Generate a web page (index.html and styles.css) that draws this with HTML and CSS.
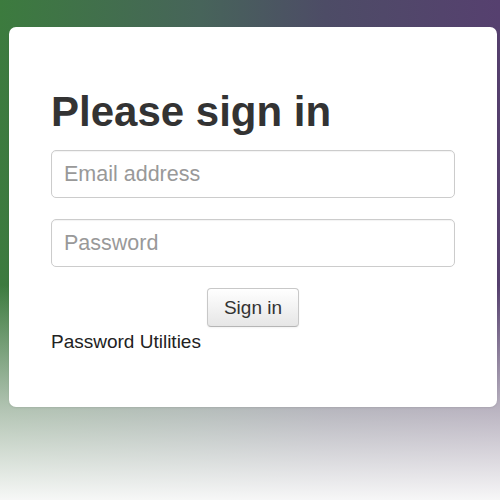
FILE: index.html
```html
<!DOCTYPE html>
<html>
<head>
<meta charset="utf-8">
<link rel="stylesheet" href="styles.css">
</head>
<body>
<div class="page">
  <form class="card">
    <h1 class="title">Please sign in</h1>
    <input class="field" type="text" placeholder="Email address">
    <input class="field" type="password" placeholder="Password">
    <div class="actions"><button class="btn" type="button">Sign in</button></div>
    <a class="link">Password Utilities</a>
  </form>
</div>
</body>
</html>
```
FILE: styles.css
```css
html, body {
  margin: 0;
  height: 100%;
}
body {
  font-family: "Liberation Sans", Arial, sans-serif;
  background:
    linear-gradient(to bottom, rgba(236,236,236,0) 0%, rgba(236,236,236,0) 57%, rgba(225,225,225,0.72) 82%, rgba(250,250,250,0.98) 100%),
    linear-gradient(to right, #3c7b3e 0%, #47645a 40%, #4d4c66 65%, #56406f 100%);
}
.page {
  padding: 27px 3px 0 9px;
}
.card {
  box-sizing: border-box;
  height: 380px;
  background: #fff;
  border-radius: 7px;
  padding: 62px 42px 0 42px;
  display: flex;
  flex-direction: column;
  box-shadow: 0 1px 2px rgba(0,0,0,0.08);
}
.title {
  margin: 0 0 15px 0;
  font-size: 42px;
  line-height: 46px;
  font-weight: bold;
  color: #333;
}
.field {
  box-sizing: border-box;
  height: 48px;
  width: 100%;
  margin: 0 0 21px 0;
  padding: 0 12px;
  border: 1px solid #cccccc;
  border-radius: 5px;
  font-family: inherit;
  font-size: 21.5px;
  color: #555;
  background: #fff;
  box-shadow: inset 0 1px 1px rgba(0,0,0,0.05);
  outline: none;
}
.field::placeholder {
  color: #999;
}
.actions {
  display: flex;
  justify-content: center;
}
.btn {
  box-sizing: border-box;
  width: 92px;
  height: 39px;
  padding: 0;
  border: 1px solid #c8c8c8;
  border-bottom-color: #b5b5b5;
  border-radius: 4px;
  background: linear-gradient(to bottom, #ffffff 0%, #e6e6e6 100%);
  font-family: inherit;
  font-size: 19px;
  color: #333;
  box-shadow: inset 0 1px 0 rgba(255,255,255,0.2), 0 1px 2px rgba(0,0,0,0.05);
}
.link {
  margin-top: 4px;
  font-size: 19px;
  line-height: 21px;
  color: #222;
}
```
